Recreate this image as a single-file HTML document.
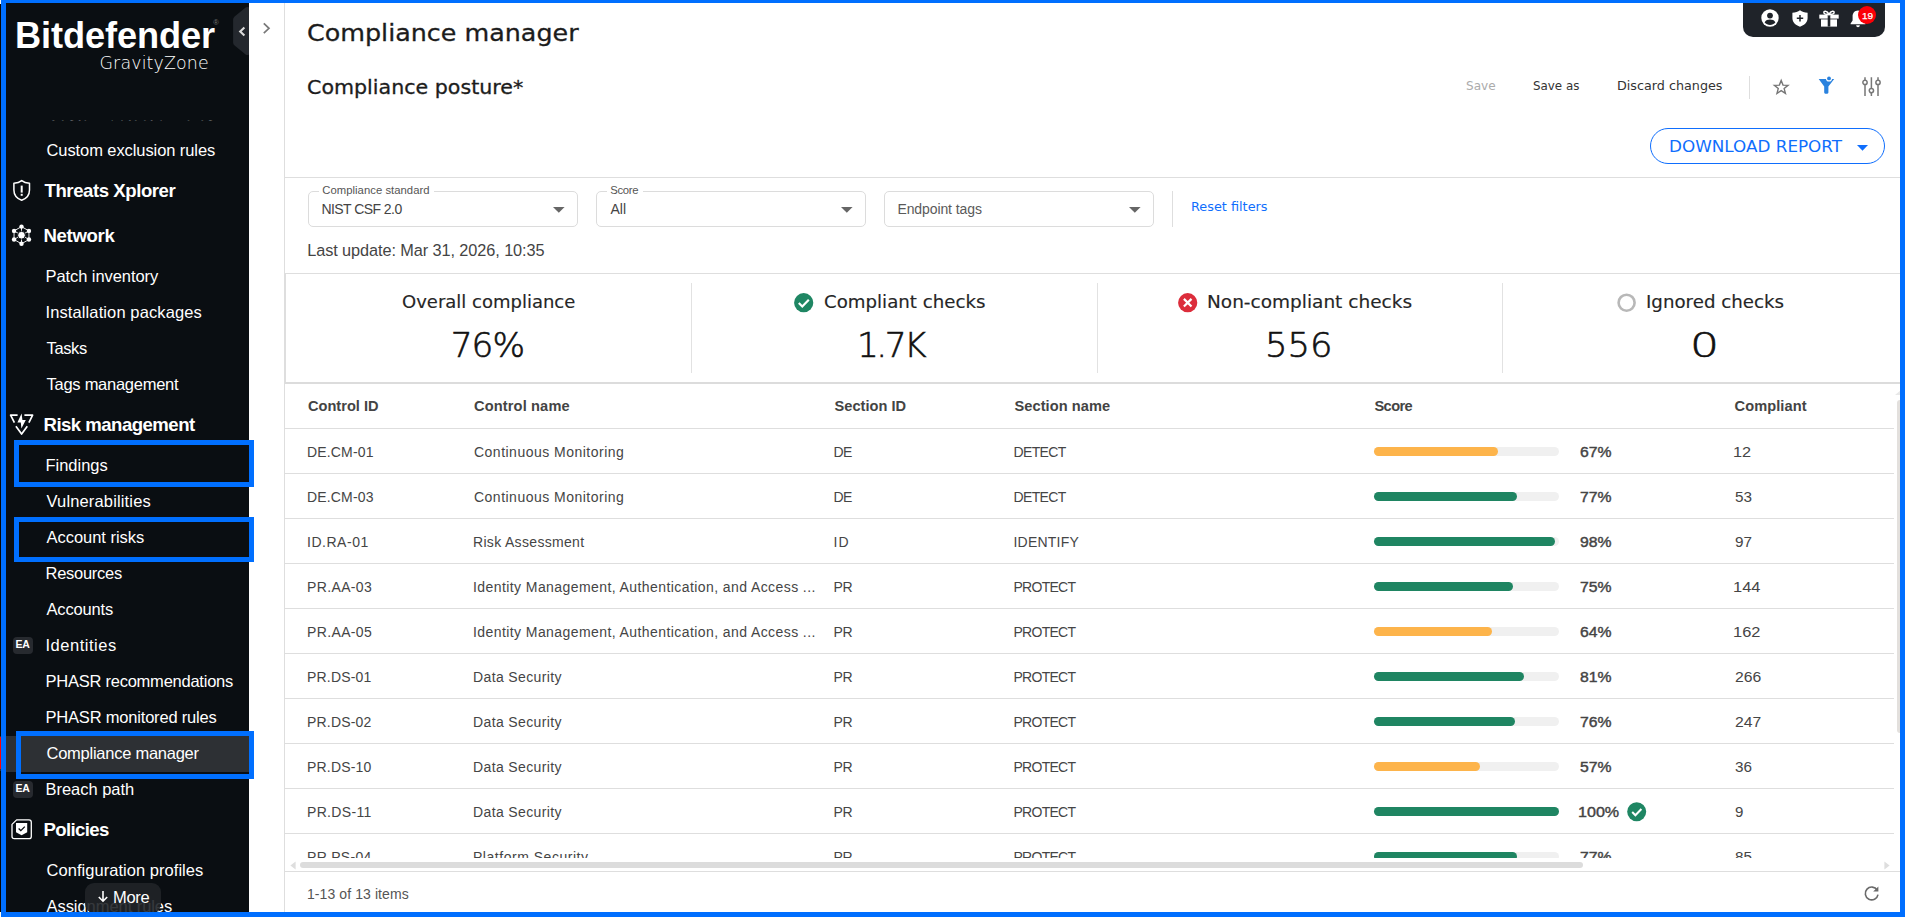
<!DOCTYPE html>
<html lang="en"><head><meta charset="utf-8"><title>Compliance manager - GravityZone</title>
<style>
*{box-sizing:border-box}
html,body{margin:0;padding:0}
body{width:1906px;height:917px;overflow:hidden;background:#fff;position:relative;font-family:"Liberation Sans",sans-serif;}
.t{position:absolute;white-space:nowrap;line-height:1;color:#fff}
.dj{font-family:"DejaVu Sans","Liberation Sans",sans-serif}
.djl{font-family:"DejaVu Sans Light","DejaVu Sans",sans-serif;font-weight:200}
.big{-webkit-text-stroke:.6px #111}
.med{-webkit-text-stroke:.4px #444}
.ttl{-webkit-text-stroke:.3px #1c1c1c}
.lbl{-webkit-text-stroke:.15px #262626}
.abs{position:absolute}
.ln{position:absolute;background:#dedede}
svg{position:absolute;overflow:visible}
</style></head><body>

<div class="abs" id="sidebar" style="left:0;top:0;width:249px;height:917px;background:#0a0e12">
<span class="t" id="t1" style="top:18.00px;font-size:36.2px;left:15.00px;font-weight:700;letter-spacing:-0.098px;">Bitdefender</span>
<span class="t" id="t2" style="top:19.00px;font-size:7.5px;left:213.20px;color:#777;">&reg;</span>
<span class="t djl" id="t3" style="top:55.00px;font-size:17.4px;left:99.50px;letter-spacing:0.141px;">GravityZone</span>
<svg style="left:232px;top:7px" width="17" height="48" viewBox="0 0 17 48"><path d="M17 0.2 L15.4 0 Q14.4 0 13.6 0.6 L2.6 9.4 Q1.1 10.6 1.1 12.6 L1.1 35.4 Q1.1 37.4 2.6 38.6 L13.6 47.4 Q14.4 48 15.4 48 L17 47.8 Z" fill="#24282e"/><path d="M12.4 20.4 L8.2 24.4 L12.4 28.4" fill="none" stroke="#dcdcdc" stroke-width="2.1"/></svg>
<svg style="left:46.5px;top:120px;overflow:hidden" width="180" height="1" viewBox="0 0 180 1"><text x="0" y="0" font-family="Liberation Sans, sans-serif" font-size="16.5" fill="#fff" text-rendering="geometricPrecision" textLength="168" lengthAdjust="spacing">Custom detection rules</text></svg>
<span class="t" id="t4" style="top:142.00px;font-size:16.5px;left:46.50px;letter-spacing:-0.087px;">Custom exclusion rules</span>
<span class="t" id="t5" style="top:182.00px;font-size:18.6px;left:44.50px;font-weight:700;letter-spacing:-0.442px;">Threats Xplorer</span>
<span class="t" id="t6" style="top:227.00px;font-size:18.6px;left:43.50px;font-weight:700;letter-spacing:-0.336px;">Network</span>
<span class="t" id="t7" style="top:268.00px;font-size:16.5px;left:45.50px;letter-spacing:-0.070px;">Patch inventory</span>
<span class="t" id="t8" style="top:304.00px;font-size:16.5px;left:45.50px;letter-spacing:0.108px;">Installation packages</span>
<span class="t" id="t9" style="top:340.00px;font-size:16.5px;left:46.50px;letter-spacing:-0.357px;">Tasks</span>
<span class="t" id="t10" style="top:376.00px;font-size:16.5px;left:46.50px;letter-spacing:-0.262px;">Tags management</span>
<span class="t" id="t11" style="top:416.00px;font-size:18.6px;left:43.50px;font-weight:700;letter-spacing:-0.532px;">Risk management</span>
<span class="t" id="t12" style="top:457.00px;font-size:16.5px;left:45.50px;letter-spacing:-0.017px;">Findings</span>
<span class="t" id="t13" style="top:493.00px;font-size:16.5px;left:46.50px;letter-spacing:0.153px;">Vulnerabilities</span>
<span class="t" id="t14" style="top:529.00px;font-size:16.5px;left:46.50px;letter-spacing:-0.030px;">Account risks</span>
<span class="t" id="t15" style="top:565.00px;font-size:16.5px;left:45.50px;letter-spacing:-0.265px;">Resources</span>
<span class="t" id="t16" style="top:601.00px;font-size:16.5px;left:46.50px;letter-spacing:-0.160px;">Accounts</span>
<span class="t" id="t17" style="top:637.00px;font-size:16.5px;left:45.50px;letter-spacing:0.523px;">Identities</span>
<span class="t" id="t18" style="top:673.00px;font-size:16.5px;left:45.50px;letter-spacing:-0.241px;">PHASR recommendations</span>
<span class="t" id="t19" style="top:709.00px;font-size:16.5px;left:45.50px;letter-spacing:-0.195px;">PHASR monitored rules</span>
<div class="abs" style="left:0;top:735.5px;width:249px;height:36px;background:#2d3034"></div>
<span class="t" id="t20" style="top:745.00px;font-size:16.5px;left:46.50px;letter-spacing:-0.255px;">Compliance manager</span>
<span class="t" id="t21" style="top:781.00px;font-size:16.5px;left:45.50px;letter-spacing:-0.030px;">Breach path</span>
<span class="t" id="t22" style="top:821.00px;font-size:18.6px;left:43.50px;font-weight:700;letter-spacing:-0.634px;">Policies</span>
<span class="t" id="t23" style="top:862.00px;font-size:16.5px;left:46.50px;letter-spacing:0.040px;">Configuration profiles</span>
<span class="t" id="t24" style="top:898.00px;font-size:16.5px;left:46.50px;letter-spacing:-0.054px;">Assignment rules</span>
<div class="abs" style="left:13px;top:637px;width:20px;height:17px;border-radius:4px;background:#272a2f"></div>
<div class="abs" style="left:13px;top:781px;width:20px;height:17px;border-radius:4px;background:#272a2f"></div>
<span class="t" id="t25" style="top:639.00px;font-size:10.5px;left:15.60px;font-weight:700;letter-spacing:-0.403px;">EA</span>
<span class="t" id="t26" style="top:783.00px;font-size:10.5px;left:15.60px;font-weight:700;letter-spacing:-0.403px;">EA</span>
<div class="abs" style="left:85px;top:882.5px;width:76px;height:30px;border-radius:9px;background:rgba(32,35,40,.9)"></div>
<svg style="left:97px;top:890px" width="12" height="13" viewBox="0 0 12 13"><path d="M6 1 V11 M1.8 7 L6 11.2 L10.2 7" fill="none" stroke="#fff" stroke-width="1.6"/></svg>
<span class="t" id="t27" style="top:889.00px;font-size:16.5px;left:113.00px;letter-spacing:-0.305px;">More</span>
<svg style="left:12px;top:179px" width="20" height="23" viewBox="0 0 20 23"><path d="M9.7 1.6 C7.5 3.4 4.6 4.1 1.9 4.2 V11 C1.9 16 5 19.6 9.7 21.3 C14.4 19.6 17.5 16 17.5 11 V4.2 C14.8 4.1 11.9 3.4 9.7 1.6 Z" fill="none" stroke="#fff" stroke-width="1.5" stroke-linejoin="round"/><rect x="8.7" y="6.6" width="2" height="7" fill="#fff"/><rect x="8.7" y="14.8" width="2" height="2" fill="#fff"/></svg>
<svg style="left:11px;top:224px" width="21" height="23" viewBox="0 0 21 23"><polygon points="10.50,2.60 17.95,6.90 17.95,15.50 10.50,19.80 3.05,15.50 3.05,6.90" fill="none" stroke="#fff" stroke-width="0.9"/><line x1="10.5" y1="11.2" x2="10.50" y2="2.60" stroke="#fff" stroke-width="0.9"/><line x1="10.5" y1="11.2" x2="17.95" y2="6.90" stroke="#fff" stroke-width="0.9"/><line x1="10.5" y1="11.2" x2="17.95" y2="15.50" stroke="#fff" stroke-width="0.9"/><line x1="10.5" y1="11.2" x2="10.50" y2="19.80" stroke="#fff" stroke-width="0.9"/><line x1="10.5" y1="11.2" x2="3.05" y2="15.50" stroke="#fff" stroke-width="0.9"/><line x1="10.5" y1="11.2" x2="3.05" y2="6.90" stroke="#fff" stroke-width="0.9"/><circle cx="10.5" cy="11.2" r="3.9" fill="#fff" stroke="#0a0e12" stroke-width="1"/><circle cx="10.50" cy="2.60" r="2.2" fill="#fff"/><circle cx="17.95" cy="6.90" r="2.2" fill="#fff"/><circle cx="17.95" cy="15.50" r="2.2" fill="#fff"/><circle cx="10.50" cy="19.80" r="2.2" fill="#fff"/><circle cx="3.05" cy="15.50" r="2.2" fill="#fff"/><circle cx="3.05" cy="6.90" r="2.2" fill="#fff"/></svg>
<svg style="left:0;top:0" width="40" height="440" viewBox="0 0 40 440"><g fill="none" stroke="#fff" stroke-width="1.7" stroke-linejoin="round" stroke-linecap="butt"><path d="M17.6 415.2 H10.6 L14.4 422.6"/><path d="M24.4 415.2 H32.6 L28.9 422.6"/><path d="M15.9 426.2 L21.6 434 L27.3 426.2"/></g><path d="M21.6 413.6 L17.4 422.6 H20.8 L21.4 428.6 L25.8 420 H22.4 Z" fill="#fff"/></svg>
<svg style="left:11px;top:819px" width="22" height="21" viewBox="0 0 22 21"><path d="M5.6 0.9 H18 Q20.3 0.9 20.3 3.2 V17.4 Q20.3 19.7 18 19.7 H3.3 Q1 19.7 1 17.4 V5.4 Z" fill="none" stroke="#fff" stroke-width="1.3" stroke-linejoin="round"/><path d="M5 4 H16.2 V13.2 L10.6 16.2 L5 13.2 Z" fill="#fff"/><path d="M7.6 9.6 L9.8 11.6 L13.8 7.6" fill="none" stroke="#0a0e12" stroke-width="1.3"/></svg>
</div>
<div class="abs" style="left:14px;top:440px;width:240px;height:46.5px;border:5px solid #006fff"></div>
<div class="abs" style="left:14px;top:517px;width:239.5px;height:45px;border:5px solid #006fff"></div>
<div class="abs" style="left:16px;top:731px;width:238px;height:48px;border:5px solid #006fff"></div>
<svg style="left:262px;top:22px" width="10" height="14" viewBox="0 0 10 14"><path d="M1.8 1.4 L7 6.3 L1.8 11.2" fill="none" stroke="#787878" stroke-width="1.7"/></svg>
<div class="ln" style="left:284px;top:0;width:1px;height:917px"></div>
<span class="t ttl dj" id="t28" style="top:21.00px;font-size:23.2px;left:306.91px;color:#1c1c1c;transform:scaleX(1.0948);transform-origin:0 0;">Compliance manager</span>
<span class="t ttl dj" id="t29" style="top:78.00px;font-size:19.4px;left:306.94px;color:#1c1c1c;transform:scaleX(1.0619);transform-origin:0 0;">Compliance posture*</span>
<div class="abs" style="left:1743px;top:0;width:142px;height:37px;border-radius:0 0 10px 10px;background:#1f2329"></div>
<svg style="left:1761px;top:9px" width="18" height="18" viewBox="0 0 18 18"><circle cx="9" cy="9" r="8.7" fill="#fff"/><circle cx="9" cy="6.6" r="2.9" fill="#1f2329"/><path d="M3.6 13.6 C4.6 11.2 6.8 10.6 9 10.6 C11.2 10.6 13.4 11.2 14.4 13.6 C13 15.3 11.1 16 9 16 C6.9 16 5 15.3 3.6 13.6 Z" fill="#1f2329"/></svg>
<svg style="left:1791.5px;top:9.5px" width="16" height="17" viewBox="0 0 16 17"><path d="M8 0.3 C6 1.8 3.4 2.6 0.4 2.7 V8 C0.4 12.4 3.6 15.3 8 16.7 C12.4 15.3 15.6 12.4 15.6 8 V2.7 C12.6 2.6 10 1.8 8 0.3 Z" fill="#fff"/><path d="M8 5 V11.4 M4.8 8.2 H11.2" stroke="#1f2329" stroke-width="1.5" fill="none"/></svg>
<svg style="left:1819px;top:9.5px" width="20" height="17" viewBox="0 0 20 17"><rect x="0.3" y="4.6" width="19.4" height="4" fill="#fff"/><rect x="2" y="9.4" width="16" height="7.2" fill="#fff"/><rect x="8.7" y="4.6" width="2.6" height="12" fill="#1f2329"/><path d="M10 4.4 C8 0.2 4.2 0.6 5 3 C5.4 4.2 8 4.4 10 4.4 C12 4.4 14.6 4.2 15 3 C15.8 0.6 12 0.2 10 4.4 Z" fill="none" stroke="#fff" stroke-width="1.5"/></svg>
<svg style="left:1850px;top:9.5px" width="16" height="18" viewBox="0 0 16 18"><path d="M8 0.6 C4.4 0.6 2.6 3.4 2.6 6.6 V10.6 L0.6 13.4 V14.2 H15.4 V13.4 L13.4 10.6 V6.6 C13.4 3.4 11.6 0.6 8 0.6 Z" fill="#fff"/><path d="M6.2 15.2 H9.8 C9.8 16.4 9 17.2 8 17.2 C7 17.2 6.2 16.4 6.2 15.2 Z" fill="#fff"/></svg>
<div class="abs" style="left:1858px;top:6px;width:18px;height:18px;border-radius:9px;background:#fb0007"></div>
<span class="t" id="t30" style="top:11.00px;font-size:9.6px;left:1861.80px;transform:scaleX(1.0449);transform-origin:0 0;-webkit-text-stroke:.25px #fff;">19</span>
<span class="t dj" id="t31" style="top:80.00px;font-size:12.4px;left:1466.00px;color:#ababab;transform:scaleX(0.9735);transform-origin:0 0;">Save</span>
<span class="t dj" id="t32" style="top:80.00px;font-size:12.4px;left:1533.00px;color:#333;transform:scaleX(0.9594);transform-origin:0 0;">Save as</span>
<span class="t dj" id="t33" style="top:80.00px;font-size:12.4px;left:1616.97px;color:#333;transform:scaleX(1.0284);transform-origin:0 0;">Discard changes</span>
<div class="ln" style="left:1749px;top:76px;width:1px;height:23px"></div>
<svg style="left:1773px;top:78.6px" width="17" height="17" viewBox="0 0 17 17"><polygon points="8.20,1.40 10.02,6.09 15.05,6.38 11.15,9.56 12.43,14.42 8.20,11.70 3.97,14.42 5.25,9.56 1.35,6.38 6.38,6.09" fill="none" stroke="#757575" stroke-width="1.4" stroke-linejoin="miter"/></svg>
<svg style="left:1818px;top:76px" width="18" height="19" viewBox="0 0 18 19"><path d="M0.7 2.9 H16.2 L10.4 10.6 V16.6 Q10.4 17.7 9.3 17.7 H7.3 Q6.2 17.7 6.2 16.6 V10.6 Z" fill="#2a82de"/><circle cx="11" cy="2.5" r="3.1" fill="#fff"/><circle cx="11" cy="2.4" r="1.9" fill="#2a82de"/></svg>
<svg style="left:1862px;top:76px" width="20" height="21" viewBox="0 0 20 21"><g stroke="#777" stroke-width="1.5" fill="#fff"><path d="M3 1.3 V19.9 M9.4 1.3 V19.9 M16 1.3 V19.9" fill="none"/><circle cx="3" cy="6.4" r="2.15"/><circle cx="9.4" cy="14.6" r="2.15"/><circle cx="16" cy="6.4" r="2.15"/></g></svg>
<div class="abs" style="left:1650px;top:128px;width:235px;height:36px;border:1px solid #0f6efd;border-radius:18px"></div>
<span class="t dj" id="t34" style="top:139.00px;font-size:16.4px;left:1669.48px;color:#0f6efd;transform:scaleX(1.0242);transform-origin:0 0;">DOWNLOAD REPORT</span>
<svg style="left:1857px;top:145px" width="11" height="6" viewBox="0 0 11 6"><path d="M0 0 H11 L5.5 5.8 Z" fill="#0f6efd"/></svg>
<div class="ln" style="left:285px;top:177px;width:1621px;height:1px"></div>
<div class="abs" style="left:308px;top:191px;width:270px;height:36px;border:1px solid #dcdcdc;border-radius:5px"></div><div class="abs" style="left:319px;top:186px;width:115px;height:10px;background:#fff"></div><span class="t" id="t35" style="top:185.00px;font-size:11.3px;left:322.30px;color:#555;letter-spacing:0.029px;">Compliance standard</span><span class="t" id="t36" style="top:202.00px;font-size:14px;left:321.40px;color:#444;letter-spacing:-0.550px;">NIST CSF 2.0</span><svg style="left:553px;top:207px" width="12" height="6" viewBox="0 0 12 6"><path d="M0 0 H11.6 L5.8 5.8 Z" fill="#666"/></svg>
<div class="abs" style="left:596px;top:191px;width:270px;height:36px;border:1px solid #dcdcdc;border-radius:5px"></div><div class="abs" style="left:607px;top:186px;width:36px;height:10px;background:#fff"></div><span class="t" id="t37" style="top:185.00px;font-size:11.3px;left:610.30px;color:#555;letter-spacing:-0.307px;">Score</span><span class="t" id="t38" style="top:202.00px;font-size:14px;left:610.40px;color:#444;letter-spacing:0.026px;">All</span><svg style="left:841px;top:207px" width="12" height="6" viewBox="0 0 12 6"><path d="M0 0 H11.6 L5.8 5.8 Z" fill="#666"/></svg>
<div class="abs" style="left:884px;top:191px;width:270px;height:36px;border:1px solid #dcdcdc;border-radius:5px"></div><span class="t" id="t39" style="top:202.00px;font-size:14px;left:897.40px;color:#5a5a5a;letter-spacing:-0.093px;">Endpoint tags</span><svg style="left:1129px;top:207px" width="12" height="6" viewBox="0 0 12 6"><path d="M0 0 H11.6 L5.8 5.8 Z" fill="#666"/></svg>
<div class="ln" style="left:1172px;top:191px;width:1px;height:36px"></div>
<span class="t dj" id="t40" style="top:201.00px;font-size:12.4px;left:1190.96px;color:#0f6efd;transform:scaleX(1.0363);transform-origin:0 0;">Reset filters</span>
<span class="t" id="t41" style="top:242.00px;font-size:16.3px;left:307.20px;color:#444;letter-spacing:-0.081px;">Last update: Mar 31, 2026, 10:35</span>
<div class="ln" style="left:285px;top:273px;width:1621px;height:1px;background:#dedede"></div>
<div class="ln" style="left:285px;top:273px;width:1px;height:111px;background:#dedede"></div>
<div class="ln" style="left:285px;top:382px;width:1621px;height:2px;background:#dcdcdc"></div>
<div class="ln" style="left:690.5px;top:283px;width:1px;height:90px;background:#e2e2e2"></div>
<div class="ln" style="left:1096.5px;top:283px;width:1px;height:90px;background:#e2e2e2"></div>
<div class="ln" style="left:1501.5px;top:283px;width:1px;height:90px;background:#e2e2e2"></div>
<span class="t lbl dj" id="t42" style="top:294.00px;font-size:17.2px;left:402.00px;color:#262626;transform:scaleX(1.0471);transform-origin:0 0;">Overall compliance</span>
<span class="t big djl" id="t43" style="top:328.00px;font-size:34.3px;left:450.70px;color:#111;letter-spacing:-0.921px;">76%</span>
<svg style="left:793.7px;top:293px" width="20" height="20" viewBox="0 0 20 20"><circle cx="9.7" cy="9.7" r="9.6" fill="#1f8663"/><path d="M4.8 10 L8.3 13.5 L14.8 6.8" fill="none" stroke="#fff" stroke-width="2.2"/></svg>
<span class="t lbl dj" id="t44" style="top:294.00px;font-size:17.2px;left:824.20px;color:#262626;transform:scaleX(1.0578);transform-origin:0 0;">Compliant checks</span>
<span class="t big djl" id="t45" style="top:328.00px;font-size:34.3px;left:857.00px;color:#111;letter-spacing:-2.514px;">1.7K</span>
<svg style="left:1177.8px;top:293px" width="20" height="20" viewBox="0 0 20 20"><circle cx="9.7" cy="9.7" r="9.6" fill="#dc2d3b"/><path d="M5.9 5.9 L13.5 13.5 M13.5 5.9 L5.9 13.5" fill="none" stroke="#fff" stroke-width="2.2"/></svg>
<span class="t lbl dj" id="t46" style="top:294.00px;font-size:17.2px;left:1207.42px;color:#262626;transform:scaleX(1.0760);transform-origin:0 0;">Non-compliant checks</span>
<span class="t big djl" id="t47" style="top:328.00px;font-size:34.3px;left:1264.91px;color:#111;transform:scaleX(1.0312);transform-origin:0 0;">556</span>
<svg style="left:1617px;top:293px" width="20" height="20" viewBox="0 0 20 20"><circle cx="9.6" cy="9.7" r="8" fill="none" stroke="#b8b8b8" stroke-width="2.6"/></svg>
<span class="t lbl dj" id="t48" style="top:294.00px;font-size:17.2px;left:1646.44px;color:#262626;transform:scaleX(1.0592);transform-origin:0 0;">Ignored checks</span>
<span class="t big djl" id="t49" style="top:328.00px;font-size:34.3px;left:1689.71px;color:#111;transform:scaleX(1.3313);transform-origin:0 0;">0</span>
<span class="t" id="t50" style="top:399.00px;font-size:14.6px;left:308.00px;font-weight:700;color:#444;letter-spacing:0.002px;">Control ID</span>
<span class="t" id="t51" style="top:399.00px;font-size:14.6px;left:474.00px;font-weight:700;color:#444;letter-spacing:0.142px;">Control name</span>
<span class="t" id="t52" style="top:399.00px;font-size:14.6px;left:834.50px;font-weight:700;color:#444;letter-spacing:0.020px;">Section ID</span>
<span class="t" id="t53" style="top:399.00px;font-size:14.6px;left:1014.50px;font-weight:700;color:#444;letter-spacing:0.066px;">Section name</span>
<span class="t" id="t54" style="top:399.00px;font-size:14.6px;left:1374.50px;font-weight:700;color:#444;letter-spacing:-0.611px;">Score</span>
<span class="t" id="t55" style="top:399.00px;font-size:14.6px;left:1734.50px;font-weight:700;color:#444;letter-spacing:0.089px;">Compliant</span>
<div class="ln" style="left:285px;top:428px;width:1609px;height:1px"></div>
<div class="abs" id="tbody" style="left:285px;top:429px;width:1615px;height:428.8px;overflow:hidden">
<span class="t" id="t56" style="top:16.00px;font-size:14px;left:22.00px;color:#454545;letter-spacing:0.163px;">DE.CM-01</span>
<span class="t" id="t57" style="top:16.00px;font-size:14px;left:189.00px;color:#454545;letter-spacing:0.485px;">Continuous Monitoring</span>
<span class="t" id="t58" style="top:16.00px;font-size:14px;left:548.50px;color:#454545;letter-spacing:-0.610px;">DE</span>
<span class="t" id="t59" style="top:16.00px;font-size:14px;left:728.50px;color:#454545;letter-spacing:-0.650px;">DETECT</span>
<div class="abs" style="left:1089px;top:18px;width:185px;height:9px;border-radius:5px;background:#f0f0f0"><div style="width:124.0px;height:9px;border-radius:5px;background:#fdb44b"></div></div>
<span class="t med" id="t60" style="top:16.00px;font-size:14px;left:1294.50px;color:#444;transform:scaleX(1.1243);transform-origin:0 0;">67%</span>
<span class="t" id="t61" style="top:16.00px;font-size:14px;left:1448.34px;color:#454545;transform:scaleX(1.1633);transform-origin:0 0;">12</span>
<div class="ln" style="left:0;top:44px;width:1609px;height:1px"></div>
<span class="t" id="t62" style="top:61.00px;font-size:14px;left:22.00px;color:#454545;letter-spacing:0.163px;">DE.CM-03</span>
<span class="t" id="t63" style="top:61.00px;font-size:14px;left:189.00px;color:#454545;letter-spacing:0.485px;">Continuous Monitoring</span>
<span class="t" id="t64" style="top:61.00px;font-size:14px;left:548.50px;color:#454545;letter-spacing:-0.610px;">DE</span>
<span class="t" id="t65" style="top:61.00px;font-size:14px;left:728.50px;color:#454545;letter-spacing:-0.650px;">DETECT</span>
<div class="abs" style="left:1089px;top:63px;width:185px;height:9px;border-radius:5px;background:#f0f0f0"><div style="width:142.5px;height:9px;border-radius:5px;background:#1f8562"></div></div>
<span class="t med" id="t66" style="top:61.00px;font-size:14px;left:1294.50px;color:#444;transform:scaleX(1.1243);transform-origin:0 0;">77%</span>
<span class="t" id="t67" style="top:61.00px;font-size:14px;left:1449.50px;color:#454545;transform:scaleX(1.0896);transform-origin:0 0;">53</span>
<div class="ln" style="left:0;top:89px;width:1609px;height:1px"></div>
<span class="t" id="t68" style="top:106.00px;font-size:14px;left:22.00px;color:#454545;letter-spacing:0.531px;">ID.RA-01</span>
<span class="t" id="t69" style="top:106.00px;font-size:14px;left:188.00px;color:#454545;letter-spacing:0.324px;">Risk Assessment</span>
<span class="t" id="t70" style="top:106.00px;font-size:14px;left:548.50px;color:#454545;letter-spacing:1.110px;">ID</span>
<span class="t" id="t71" style="top:106.00px;font-size:14px;left:728.50px;color:#454545;letter-spacing:0.223px;">IDENTIFY</span>
<div class="abs" style="left:1089px;top:108px;width:185px;height:9px;border-radius:5px;background:#f0f0f0"><div style="width:181.3px;height:9px;border-radius:5px;background:#1f8562"></div></div>
<span class="t med" id="t72" style="top:106.00px;font-size:14px;left:1294.50px;color:#444;transform:scaleX(1.1243);transform-origin:0 0;">98%</span>
<span class="t" id="t73" style="top:106.00px;font-size:14px;left:1449.50px;color:#454545;transform:scaleX(1.0896);transform-origin:0 0;">97</span>
<div class="ln" style="left:0;top:134px;width:1609px;height:1px"></div>
<span class="t" id="t74" style="top:151.00px;font-size:14px;left:22.00px;color:#454545;letter-spacing:0.363px;">PR.AA-03</span>
<span class="t" id="t75" style="top:151.00px;font-size:14px;left:188.00px;color:#454545;letter-spacing:0.419px;">Identity Management, Authentication, and Access ...</span>
<span class="t" id="t76" style="top:151.00px;font-size:14px;left:548.50px;color:#454545;letter-spacing:-0.338px;">PR</span>
<span class="t" id="t77" style="top:151.00px;font-size:14px;left:728.50px;color:#454545;letter-spacing:-0.723px;">PROTECT</span>
<div class="abs" style="left:1089px;top:153px;width:185px;height:9px;border-radius:5px;background:#f0f0f0"><div style="width:138.8px;height:9px;border-radius:5px;background:#1f8562"></div></div>
<span class="t med" id="t78" style="top:151.00px;font-size:14px;left:1294.50px;color:#444;transform:scaleX(1.1243);transform-origin:0 0;">75%</span>
<span class="t" id="t79" style="top:151.00px;font-size:14px;left:1448.33px;color:#454545;transform:scaleX(1.1740);transform-origin:0 0;">144</span>
<div class="ln" style="left:0;top:179px;width:1609px;height:1px"></div>
<span class="t" id="t80" style="top:196.00px;font-size:14px;left:22.00px;color:#454545;letter-spacing:0.363px;">PR.AA-05</span>
<span class="t" id="t81" style="top:196.00px;font-size:14px;left:188.00px;color:#454545;letter-spacing:0.419px;">Identity Management, Authentication, and Access ...</span>
<span class="t" id="t82" style="top:196.00px;font-size:14px;left:548.50px;color:#454545;letter-spacing:-0.338px;">PR</span>
<span class="t" id="t83" style="top:196.00px;font-size:14px;left:728.50px;color:#454545;letter-spacing:-0.723px;">PROTECT</span>
<div class="abs" style="left:1089px;top:198px;width:185px;height:9px;border-radius:5px;background:#f0f0f0"><div style="width:118.4px;height:9px;border-radius:5px;background:#fdb44b"></div></div>
<span class="t med" id="t84" style="top:196.00px;font-size:14px;left:1294.50px;color:#444;transform:scaleX(1.1243);transform-origin:0 0;">64%</span>
<span class="t" id="t85" style="top:196.00px;font-size:14px;left:1448.33px;color:#454545;transform:scaleX(1.1740);transform-origin:0 0;">162</span>
<div class="ln" style="left:0;top:224px;width:1609px;height:1px"></div>
<span class="t" id="t86" style="top:241.00px;font-size:14px;left:22.00px;color:#454545;letter-spacing:0.181px;">PR.DS-01</span>
<span class="t" id="t87" style="top:241.00px;font-size:14px;left:188.00px;color:#454545;letter-spacing:0.372px;">Data Security</span>
<span class="t" id="t88" style="top:241.00px;font-size:14px;left:548.50px;color:#454545;letter-spacing:-0.338px;">PR</span>
<span class="t" id="t89" style="top:241.00px;font-size:14px;left:728.50px;color:#454545;letter-spacing:-0.723px;">PROTECT</span>
<div class="abs" style="left:1089px;top:243px;width:185px;height:9px;border-radius:5px;background:#f0f0f0"><div style="width:149.8px;height:9px;border-radius:5px;background:#1f8562"></div></div>
<span class="t med" id="t90" style="top:241.00px;font-size:14px;left:1294.50px;color:#444;transform:scaleX(1.1243);transform-origin:0 0;">81%</span>
<span class="t" id="t91" style="top:241.00px;font-size:14px;left:1449.50px;color:#454545;transform:scaleX(1.1242);transform-origin:0 0;">266</span>
<div class="ln" style="left:0;top:269px;width:1609px;height:1px"></div>
<span class="t" id="t92" style="top:286.00px;font-size:14px;left:22.00px;color:#454545;letter-spacing:0.181px;">PR.DS-02</span>
<span class="t" id="t93" style="top:286.00px;font-size:14px;left:188.00px;color:#454545;letter-spacing:0.372px;">Data Security</span>
<span class="t" id="t94" style="top:286.00px;font-size:14px;left:548.50px;color:#454545;letter-spacing:-0.338px;">PR</span>
<span class="t" id="t95" style="top:286.00px;font-size:14px;left:728.50px;color:#454545;letter-spacing:-0.723px;">PROTECT</span>
<div class="abs" style="left:1089px;top:288px;width:185px;height:9px;border-radius:5px;background:#f0f0f0"><div style="width:140.6px;height:9px;border-radius:5px;background:#1f8562"></div></div>
<span class="t med" id="t96" style="top:286.00px;font-size:14px;left:1294.50px;color:#444;transform:scaleX(1.1243);transform-origin:0 0;">76%</span>
<span class="t" id="t97" style="top:286.00px;font-size:14px;left:1449.50px;color:#454545;transform:scaleX(1.1242);transform-origin:0 0;">247</span>
<div class="ln" style="left:0;top:314px;width:1609px;height:1px"></div>
<span class="t" id="t98" style="top:331.00px;font-size:14px;left:22.00px;color:#454545;letter-spacing:0.181px;">PR.DS-10</span>
<span class="t" id="t99" style="top:331.00px;font-size:14px;left:188.00px;color:#454545;letter-spacing:0.372px;">Data Security</span>
<span class="t" id="t100" style="top:331.00px;font-size:14px;left:548.50px;color:#454545;letter-spacing:-0.338px;">PR</span>
<span class="t" id="t101" style="top:331.00px;font-size:14px;left:728.50px;color:#454545;letter-spacing:-0.723px;">PROTECT</span>
<div class="abs" style="left:1089px;top:333px;width:185px;height:9px;border-radius:5px;background:#f0f0f0"><div style="width:105.5px;height:9px;border-radius:5px;background:#fdb44b"></div></div>
<span class="t med" id="t102" style="top:331.00px;font-size:14px;left:1294.50px;color:#444;transform:scaleX(1.1243);transform-origin:0 0;">57%</span>
<span class="t" id="t103" style="top:331.00px;font-size:14px;left:1449.50px;color:#454545;transform:scaleX(1.0896);transform-origin:0 0;">36</span>
<div class="ln" style="left:0;top:359px;width:1609px;height:1px"></div>
<span class="t" id="t104" style="top:376.00px;font-size:14px;left:22.00px;color:#454545;letter-spacing:0.329px;">PR.DS-11</span>
<span class="t" id="t105" style="top:376.00px;font-size:14px;left:188.00px;color:#454545;letter-spacing:0.372px;">Data Security</span>
<span class="t" id="t106" style="top:376.00px;font-size:14px;left:548.50px;color:#454545;letter-spacing:-0.338px;">PR</span>
<span class="t" id="t107" style="top:376.00px;font-size:14px;left:728.50px;color:#454545;letter-spacing:-0.723px;">PROTECT</span>
<div class="abs" style="left:1089px;top:378px;width:185px;height:9px;border-radius:5px;background:#f0f0f0"><div style="width:185.0px;height:9px;border-radius:5px;background:#1f8562"></div></div>
<span class="t med" id="t108" style="top:376.00px;font-size:14px;left:1293.35px;color:#444;transform:scaleX(1.1496);transform-origin:0 0;">100%</span>
<svg style="left:1341.5px;top:372.6px" width="20" height="20" viewBox="0 0 20 20"><circle cx="9.7" cy="9.7" r="9.5" fill="#1f8663"/><path d="M5.2 10 L8.4 13.2 L14.4 7" fill="none" stroke="#fff" stroke-width="2"/></svg>
<span class="t" id="t109" style="top:376.00px;font-size:14px;left:1449.50px;color:#454545;transform:scaleX(1.0750);transform-origin:0 0;">9</span>
<div class="ln" style="left:0;top:404px;width:1609px;height:1px"></div>
<span class="t" id="t110" style="top:421.00px;font-size:14px;left:22.00px;color:#454545;letter-spacing:0.291px;">PR.PS-04</span>
<span class="t" id="t111" style="top:421.00px;font-size:14px;left:188.00px;color:#454545;letter-spacing:0.526px;">Platform Security</span>
<span class="t" id="t112" style="top:421.00px;font-size:14px;left:548.50px;color:#454545;letter-spacing:-0.338px;">PR</span>
<span class="t" id="t113" style="top:421.00px;font-size:14px;left:728.50px;color:#454545;letter-spacing:-0.723px;">PROTECT</span>
<div class="abs" style="left:1089px;top:423px;width:185px;height:9px;border-radius:5px;background:#f0f0f0"><div style="width:142.5px;height:9px;border-radius:5px;background:#1f8562"></div></div>
<span class="t med" id="t114" style="top:421.00px;font-size:14px;left:1294.50px;color:#444;transform:scaleX(1.1243);transform-origin:0 0;">77%</span>
<span class="t" id="t115" style="top:421.00px;font-size:14px;left:1449.50px;color:#454545;transform:scaleX(1.0896);transform-origin:0 0;">85</span>
</div>
<svg style="left:290px;top:860.5px" width="6" height="9" viewBox="0 0 6 9"><path d="M5.6 0.4 V8.6 L0.4 4.5 Z" fill="#dedede"/></svg>
<div class="abs" style="left:300px;top:861.5px;width:1282.5px;height:6.5px;border-radius:3.5px;background:#dcdcdc"></div>
<svg style="left:1884px;top:860.5px" width="6" height="9" viewBox="0 0 6 9"><path d="M0.4 0.4 V8.6 L5.6 4.5 Z" fill="#dedede"/></svg>
<div class="abs" style="left:1897px;top:399.5px;width:6px;height:333px;border-radius:3px;background:#e3e0dd"></div>
<svg style="left:1895px;top:390px" width="6" height="5" viewBox="0 0 6 5"><path d="M0 5 L6 5 L6 0 Z" fill="#e8e8e8"/></svg>
<div class="ln" style="left:285px;top:871px;width:1621px;height:1px"></div>
<span class="t" id="t116" style="top:887.00px;font-size:14px;left:307.00px;color:#555;letter-spacing:0.088px;">1-13 of 13 items</span>
<svg style="left:1863px;top:885px" width="17" height="17" viewBox="0 0 17 17"><path d="M14.2 5.2 A6.4 6.4 0 1 0 15 9.6" fill="none" stroke="#6a6a6a" stroke-width="1.6"/><path d="M15.4 1.4 V6.6 H10.2 Z" fill="#6a6a6a"/></svg>
<div class="abs" style="left:0;top:0;width:1px;height:917px;background:#fffdf5"></div>
<div class="abs" style="left:0;top:4px;width:1px;height:908px;background:#0a0500"></div>
<div class="abs" style="left:0;top:735.5px;width:1px;height:35.5px;background:#2d3034"></div>
<div class="abs" style="left:0;top:737px;width:1px;height:32px;background:#ff0000"></div>
<div class="abs" style="left:1px;top:0;width:1904px;height:3px;background:#006fff"></div>
<div class="abs" style="left:1px;top:0;width:5px;height:917px;background:#006fff"></div>
<div class="abs" style="left:1900px;top:0;width:5px;height:917px;background:#006fff"></div>
<div class="abs" style="left:1px;top:912px;width:1904px;height:5px;background:#006fff"></div>
<div class="abs" style="left:1905px;top:0;width:1px;height:917px;background:#fff"></div>

</body></html>
